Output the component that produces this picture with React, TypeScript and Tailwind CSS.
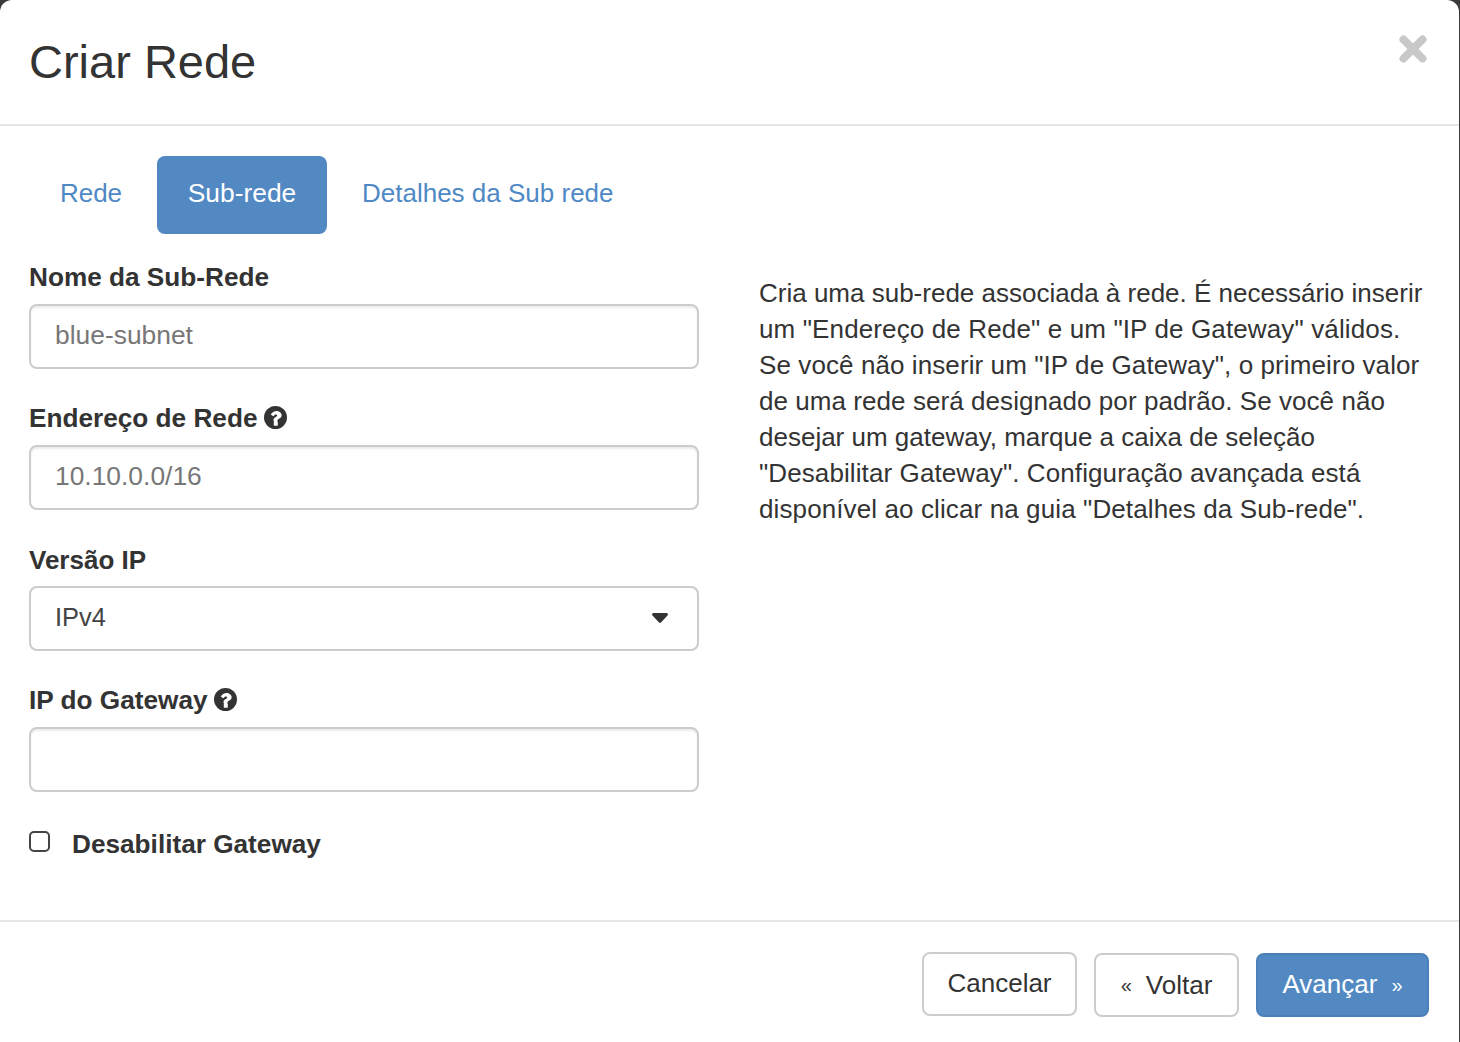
import React from 'react';

const fontStack = { fontFamily: '"Liberation Sans", Arial, sans-serif' };

const HelpIcon = () => (
  <svg className="-mt-[3px] ml-[6px] h-[23px] w-[23px] text-[#333]" viewBox="0 0 24 24" fill="currentColor">
    <path
      fillRule="evenodd"
      d="M12 0a12 12 0 1 1 0 24a12 12 0 0 1 0-24zM10.2 16.6v3.4a.6.6 0 0 0 .6.6h3a.6.6 0 0 0 .6-.6v-3.4a.6.6 0 0 0-.6-.6h-3a.6.6 0 0 0-.6.6zM7 8.3a.5.5 0 0 0 .2.6l2 1.6a.6.6 0 0 0 .8-.1c.8-1 1.3-1.6 2.2-1.6c.8 0 1.6.5 1.6 1.2c0 .7-.6 1-1.500 1.500c-1.200.7-2.400 1.500-2.400 3.300v.4a.6.6 0 0 0 .6.6h3a.6.6 0 0 0 .6-.6c0-1 .6-1.300 1.500-1.800c1.300-.8 2.800-1.700 2.800-3.800c0-2.800-2.900-4.500-5.300-4.500c-2.400 0-4 1-5.100 2.800z"
    />
  </svg>
);

const Field = ({ label, help, value, className }: { label: string; help?: boolean; value?: string; className?: string }) => (
  <div className={className}>
    <label className="flex h-[36px] items-center pt-[2px] text-[26.2px] font-bold text-[#333]">
      {label}
      {help && <HelpIcon />}
    </label>
    <div className="mt-[9px] flex h-[65px] items-center rounded-[8px] border-2 border-[#ccc] bg-white px-[24px] pb-[2px] text-[26.4px] text-[#777] shadow-[inset_0_2px_2px_rgba(0,0,0,0.075)]">
      {value}
    </div>
  </div>
);

export default function App() {
  return (
    <div className="h-[1042px] w-[1460px] overflow-hidden bg-[#3a3a3a]" style={fontStack}>
      <div className="h-[1042px] w-[1459px] rounded-t-[12px] bg-white text-[#333]">
        <header className="flex h-[126px] items-start justify-between border-b-2 border-[#e5e5e5] pl-[29px] pr-[32px]">
          <h1 className="mt-[36px] text-[47px] leading-[52px] font-normal">Criar Rede</h1>
          <svg className="mt-[35px] h-[28px] w-[28px] text-[#c8c8c8]" viewBox="0 0 28 28" fill="none" stroke="currentColor" strokeWidth="8" strokeLinecap="round">
            <path d="M4.500 4.500L23.500 23.500M23.500 4.500L4.500 23.500" />
          </svg>
        </header>

        <div className="flex h-[796px] border-b-2 border-[#e5e5e5] pl-[29px]">
          <div className="w-[670px]">
            <nav className="mt-[30px] flex h-[78px] items-stretch text-[26.4px] text-[#4f89c5]">
              <a className="flex w-[124px] items-center justify-center pb-[3px] text-[26px]">Rede</a>
              <a className="ml-[4px] flex w-[170px] items-center justify-center rounded-[8px] bg-[#5289c3] pb-[3px] text-white">Sub-rede</a>
              <a className="ml-[4px] flex items-center px-[31px] pb-[3px] text-[26px]">Detalhes da Sub rede</a>
            </nav>
            <Field className="mt-[25px]" label="Nome da Sub-Rede" value="blue-subnet" />
            <Field className="mt-[31px]" label="Endereço de Rede" help value="10.10.0.0/16" />
            <div className="mt-[31px]">
              <label className="flex h-[36px] items-center pt-[2px] text-[26px] font-bold">Versão IP</label>
              <div className="mt-[9px] flex h-[65px] items-center justify-between rounded-[8px] border-2 border-[#ccc] bg-white pb-[2px] pl-[24px] pr-[29px] text-[25.4px] text-[#444]">
                IPv4
                <svg className="h-[10px] w-[16px] text-[#333]" viewBox="0 0 16 10" fill="currentColor">
                  <path d="M0 1.500Q0 0 1.500 0H14.500Q16 0 16 1.500Q16 2 15 3L9 9.500Q8 10 7 9.500L1 3Q0 2 0 1.500z" />
                </svg>
              </div>
            </div>
            <Field className="mt-[31px]" label="IP do Gateway" help />
            <div className="mt-[34px] flex h-[36px] items-center">
              <span className="mb-[6px] h-[21px] w-[21px] rounded-[5px] border-2 border-[#444] bg-white" />
              <span className="ml-[22px] pt-[2px] text-[26.2px] font-bold">Desabilitar Gateway</span>
            </div>
          </div>
          <div className="ml-[60px] mt-[149px] w-[670px] text-[26px] leading-[36px] text-[#333]">
            <p>Cria uma sub-rede associada à rede. É necessário inserir</p>
            <p className="tracking-[0.13px]">um "Endereço de Rede" e um "IP de Gateway" válidos.</p>
            <p className="tracking-[0.09px]">Se você não inserir um "IP de Gateway", o primeiro valor</p>
            <p className="tracking-[0.06px]">de uma rede será designado por padrão. Se você não</p>
            <p>desejar um gateway, marque a caixa de seleção</p>
            <p className="tracking-[0.1px]">"Desabilitar Gateway". Configuração avançada está</p>
            <p className="tracking-[0.11px]">disponível ao clicar na guia "Detalhes da Sub-rede".</p>
          </div>
        </div>

        <footer className="flex items-start justify-end pr-[30px] pt-[30px] text-[26px]">
          <button className="flex h-[64px] w-[155px] items-center justify-center rounded-[8px] border-2 border-[#ccc] bg-white pb-[2px]">Cancelar</button>
          <button className="ml-[17px] mt-[1px] flex h-[64px] w-[145px] items-center justify-center rounded-[8px] border-2 border-[#ccc] bg-white">
            <span className="mr-[14px] text-[20px]">«</span>Voltar
          </button>
          <button className="ml-[17px] mt-[1px] flex h-[64px] w-[173px] items-center justify-center rounded-[8px] border-2 border-[#4a80b8] bg-[#5289c3] pb-[1px] text-white">
            Avançar<span className="ml-[14px] text-[20px]">»</span>
          </button>
        </footer>
      </div>
    </div>
  );
}
